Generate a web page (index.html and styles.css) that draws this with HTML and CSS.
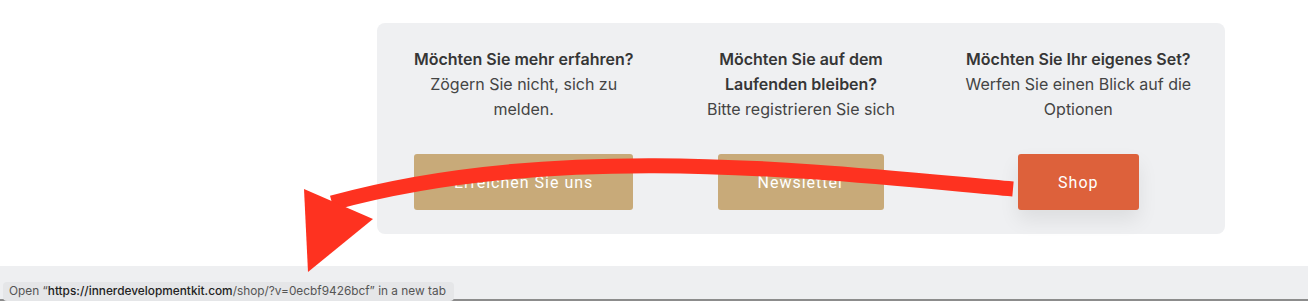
FILE: index.html
```html
<!DOCTYPE html>
<html lang="de">
<head>
    <meta charset="UTF-8">
    <meta name="viewport" content="width=device-width, initial-scale=1.0">
    <title>Inner Development Kit</title>
    <link rel="stylesheet" href="styles.css">
</head>
<body>
    <main class="page">
        <section class="contact-card">
            <div class="contact-col">
                <p class="contact-text"><strong>Möchten Sie mehr erfahren?</strong><br>Zögern Sie nicht, sich zu melden.</p>
                <a class="btn btn-sand" href="#">Erreichen Sie uns</a>
            </div>
            <div class="contact-col">
                <p class="contact-text"><strong>Möchten Sie auf dem Laufenden bleiben?</strong><br>Bitte registrieren Sie sich</p>
                <a class="btn btn-sand" href="#">Newsletter</a>
            </div>
            <div class="contact-col">
                <p class="contact-text"><strong>Möchten Sie Ihr eigenes Set?</strong><br>Werfen Sie einen Blick auf die Optionen</p>
                <a class="btn btn-shop" href="#">Shop</a>
            </div>
        </section>
    </main>

    <footer class="status-bar">
        <div class="status-tip">Open “<span class="status-host">https://innerdevelopmentkit.com</span>/shop/?v=0ecbf9426bcf” in a new tab</div>
    </footer>

    <!-- annotation arrow -->
    <svg class="annotation" width="1308" height="303" viewBox="0 0 1308 303">
        <path d="M1013,189 C820,172 560,140 332,203" fill="none" stroke="#fe3220" stroke-width="15"/>
        <polygon points="304,189 373,219 308,272" fill="#fe3220"/>
    </svg>
</body>
</html>
```

FILE: styles.css
```css
body {
    margin: 0;
    padding: 0;
    background: #ffffff;
    font-family: 'Inter', 'Noto Sans', sans-serif;
    width: 1308px;
    height: 303px;
    overflow: hidden;
    position: relative;
}

.page {
    height: 266px;
    padding-top: 23px;
    box-sizing: border-box;
}

.contact-card {
    margin-left: 377px;
    width: 848px;
    box-sizing: border-box;
    background: #eff0f2;
    border-radius: 8px;
    padding: 24px 8px 24px;
    display: grid;
    grid-template-columns: repeat(3, 1fr);
}

.contact-col {
    display: flex;
    flex-direction: column;
    align-items: center;
    padding: 0 20px;
}

.contact-text {
    margin: 0 0 32px;
    font-size: 16px;
    line-height: 25px;
    color: #444444;
    text-align: center;
}

.contact-text strong {
    font-weight: 600;
    color: #363636;
}

.btn {
    display: flex;
    align-items: center;
    height: 56px;
    padding: 0 40px;
    border-radius: 3px;
    font-family: 'Roboto', sans-serif;
    font-size: 16px;
    letter-spacing: 1px;
    color: #ffffff;
    text-decoration: none;
}

.btn-sand {
    background-color: #c8aa79;
}

.btn-shop {
    background-color: #dd613b;
    box-shadow: 0 10px 20px rgba(0, 0, 0, 0.08);
}

.status-bar {
    height: 35px;
    background: #eeeff1;
    border-bottom: 2px solid #8c8c8c;
    padding: 13px 0 0 3px;
    box-sizing: border-box;
}

.status-tip {
    display: inline-block;
    height: 19px;
    line-height: 19px;
    padding: 0 8px 0 6px;
    background: #e5e6e8;
    border-radius: 4px;
    font-family: 'Inter', sans-serif;
    font-size: 11.85px;
    color: #555555;
}

.status-host {
    color: #222222;
    font-weight: 500;
}

.annotation {
    position: absolute;
    left: 0;
    top: 0;
    pointer-events: none;
}
```
